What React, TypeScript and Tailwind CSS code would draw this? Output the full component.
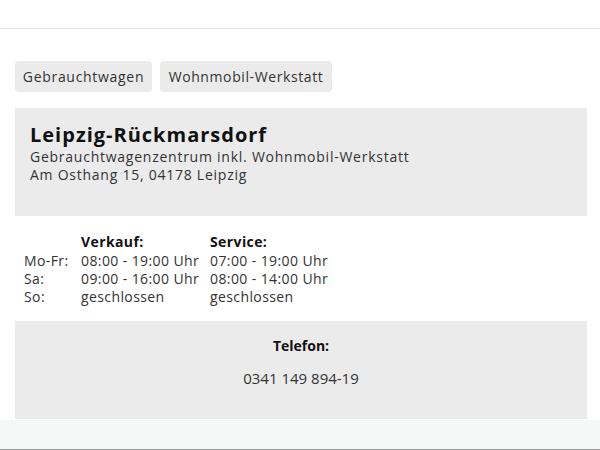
const hours = [
  { day: "Mo-Fr:", sales: "08:00 - 19:00 Uhr", service: "07:00 - 19:00 Uhr" },
  { day: "Sa:", sales: "09:00 - 16:00 Uhr", service: "08:00 - 14:00 Uhr" },
  { day: "So:", sales: "geschlossen", service: "geschlossen" },
];

export default function App() {
  return (
    <div
      className="h-[450px] w-[600px] overflow-hidden bg-white text-[#333]"
      style={{ fontFamily: '"Open Sans", sans-serif' }}
    >
      <div className="h-[29px] border-b border-[#e6e6e6]" />

      <div className="px-[15px]">
        <div className="mt-[32px] flex gap-[8px]">
          <span className="flex h-[31px] w-[137px] items-center justify-center whitespace-nowrap rounded-[4px] bg-[#ebebeb] text-[14px] tracking-[0.7px]">
            Gebrauchtwagen
          </span>
          <span className="flex h-[31px] w-[172px] items-center justify-center whitespace-nowrap rounded-[4px] bg-[#ebebeb] text-[14px] tracking-[0.6px]">
            Wohnmobil-Werkstatt
          </span>
        </div>

        <div className="mt-[16px] h-[108px] w-[572px] bg-[#ebebeb] px-[15px] pt-[14px]">
          <h2 className="text-[20px] leading-[26px] font-bold tracking-[1px] text-[#111]">
            Leipzig-Rückmarsdorf
          </h2>
          <p className="text-[14px] leading-[18px] tracking-[0.75px]">
            Gebrauchtwagenzentrum inkl. Wohnmobil-Werkstatt
          </p>
          <p className="text-[14px] leading-[18px] tracking-[0.75px]">
            Am Osthang 15, 04178 Leipzig
          </p>
        </div>

        <div className="mt-[17px] grid grid-cols-[57px_129px_auto] pl-[9px] text-[14px] leading-[18.5px] tracking-[0.4px]">
          <span />
          <span className="font-bold text-[#111]">Verkauf:</span>
          <span className="font-bold text-[#111]">Service:</span>
          {hours.map((h) => (
            <div key={h.day} className="contents">
              <span className="leading-[18.2px]">{h.day}</span>
              <span className="leading-[18.2px]">{h.sales}</span>
              <span className="leading-[18.2px]">{h.service}</span>
            </div>
          ))}
        </div>

        <div className="mt-[15px] flex h-[98px] w-[572px] flex-col items-center bg-[#ebebeb] pt-[16px]">
          <span className="text-[14px] leading-[18px] font-bold text-[#111]">Telefon:</span>
          <span className="mt-[13px] text-[15px] leading-[20px]">0341 149 894-19</span>
        </div>
      </div>

      <div className="mt-[1px] h-[30px] border-b border-[#999] bg-[#f6f7f7]" />
    </div>
  );
}
